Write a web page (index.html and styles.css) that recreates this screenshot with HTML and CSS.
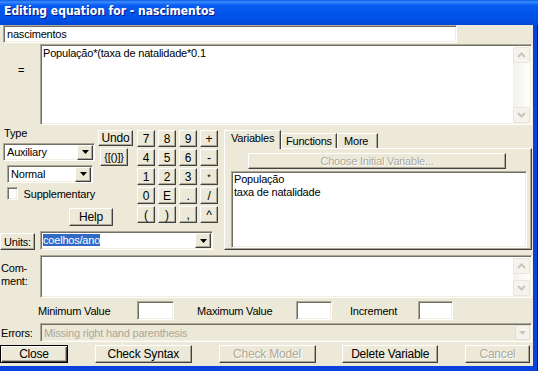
FILE: index.html
```html
<!DOCTYPE html>
<html lang="en">
<head>
  <meta charset="UTF-8" />
  <title>Editing equation</title>
  <link rel="stylesheet" href="styles.css">
</head>
<body>
  <div class="window">
    <div class="titlebar">Editing equation for - nascimentos</div>
    <div class="client">
      <div class="name-row">
        <div class="field name-field">nascimentos</div>
      </div>

      <div class="eq-row">
        <div class="side-label eq-sign">=</div>
        <div class="field textbox eq-box">
          <div class="text">População*(taxa de natalidade*0.1</div>
          <div class="vscroll">
            <div class="sbtn"><svg width="9" height="6" viewBox="0 0 9 6"><polyline points="1,5 4.5,1.5 8,5" fill="none" stroke="#c9c6b6" stroke-width="2"/></svg></div>
            <div class="sbtn"><svg width="9" height="6" viewBox="0 0 9 6"><polyline points="1,1 4.5,4.5 8,1" fill="none" stroke="#c9c6b6" stroke-width="2"/></svg></div>
          </div>
        </div>
      </div>

      <div class="middle">
        <div class="left">
          <div class="tools">
            <div class="type-block">
              <div class="type-top">
                <div class="type-col">
                  <div class="type-label">Type</div>
                  <div class="field combo aux">
                    <span class="combo-text">Auxiliary</span>
                    <span class="drop"><svg width="7" height="4" viewBox="0 0 7 4"><polygon points="0,0 7,0 3.5,4"/></svg></span>
                  </div>
                  <div class="field combo normal">
                    <span class="combo-text">Normal</span>
                    <span class="drop"><svg width="7" height="4" viewBox="0 0 7 4"><polygon points="0,0 7,0 3.5,4"/></svg></span>
                  </div>
                  <div class="check-row">
                    <span class="checkbox"></span>
                    <span>Supplementary</span>
                  </div>
                </div>
                <div class="edit-col">
                  <button class="btn undo">Undo</button>
                  <button class="btn brackets">{[()]}</button>
                </div>
              </div>
              <div class="help-row"><button class="btn help">Help</button></div>
            </div>
            <div class="keypad">
              <button class="btn">7</button><button class="btn">8</button><button class="btn">9</button><button class="btn">+</button>
              <button class="btn">4</button><button class="btn">5</button><button class="btn">6</button><button class="btn">-</button>
              <button class="btn">1</button><button class="btn">2</button><button class="btn">3</button><button class="btn small">*</button>
              <button class="btn">0</button><button class="btn">E</button><button class="btn">.</button><button class="btn">/</button>
              <button class="btn">(</button><button class="btn">)</button><button class="btn">,</button><button class="btn">^</button>
            </div>
          </div>
          <div class="units-row">
            <button class="btn units-btn">Units:</button>
            <div class="field combo units">
              <span class="combo-text"><span class="selected">coelhos/ano</span></span>
              <span class="drop"><svg width="7" height="4" viewBox="0 0 7 4"><polygon points="0,0 7,0 3.5,4"/></svg></span>
            </div>
          </div>
        </div>

        <div class="tabs">
          <div class="tab-heads">
            <div class="tab active">Variables</div>
            <div class="tab">Functions</div>
            <div class="tab">More</div>
          </div>
          <div class="tab-panel">
            <button class="btn disabled choose">Choose Initial Variable...</button>
            <div class="field listbox">
              <div>População</div>
              <div>taxa de natalidade</div>
            </div>
          </div>
        </div>
      </div>

      <div class="comment-row">
        <div class="side-label comment-label">Com-<br>ment:</div>
        <div class="field textbox comment-box">
          <div class="text"></div>
          <div class="vscroll">
            <div class="sbtn"><svg width="9" height="6" viewBox="0 0 9 6"><polyline points="1,5 4.5,1.5 8,5" fill="none" stroke="#c9c6b6" stroke-width="2"/></svg></div>
            <div class="sbtn"><svg width="9" height="6" viewBox="0 0 9 6"><polyline points="1,1 4.5,4.5 8,1" fill="none" stroke="#c9c6b6" stroke-width="2"/></svg></div>
          </div>
        </div>
      </div>

      <div class="range-row">
        <span class="range-label min-label">Minimum Value</span>
        <div class="field range-box"></div>
        <span class="range-label max-label">Maximum Value</span>
        <div class="field range-box max-box"></div>
        <span class="range-label inc-label">Increment</span>
        <div class="field range-box inc-box"></div>
      </div>

      <div class="errors-row">
        <div class="side-label errors-label">Errors:</div>
        <div class="field errors-box">
          <span class="errors-text">Missing right hand parenthesis</span>
          <span class="xp-drop"><svg width="7" height="4" viewBox="0 0 7 4"><polygon points="0,0 7,0 3.5,4" fill="#c9c6b6"/></svg></span>
        </div>
      </div>

      <div class="button-row">
        <button class="btn default close">Close</button>
        <button class="btn wide">Check Syntax</button>
        <button class="btn wide disabled">Check Model</button>
        <button class="btn delete">Delete Variable</button>
        <button class="btn cancel disabled">Cancel</button>
      </div>
    </div>
  </div>
</body>
</html>
```

FILE: styles.css
```css
* {
  margin: 0;
  padding: 0;
  box-sizing: border-box;
}
body {
  font: 11px "Liberation Sans", Arial, sans-serif;
  letter-spacing: -0.2px;
  color: #000;
  background: #ece9d8;
}

.window {
  width: 538px;
  height: 371px;
  display: flex;
  flex-direction: column;
  padding-bottom: 5px;
  background: linear-gradient(to right, #0742dc calc(100% - 1px), #001b8c 0);
}

.titlebar {
  flex: none;
  height: 25px;
  padding: 4px 0 0 4px;
  color: #fff;
  letter-spacing: 0;
  font: bold 12px "DejaVu Sans Condensed", "Liberation Sans", sans-serif;
  text-shadow: 1px 1px #0a1a8a;
  background: linear-gradient(#0a5ae6 0, #3a8cfd 2px, #0b5df3 5px, #0055ea 12px, #0150e4 20px, #0046d6 100%);
}

.client {
  flex: 1;
  width: 533px;
  padding-right: 1px;
  display: flex;
  flex-direction: column;
  background: #ece9d8;
}

/* sunken edit box */
.field {
  background: #fff;
  border: 1px solid;
  border-color: #aca899 #fff #fff #aca899;
  box-shadow: inset 1px 1px #716f64, inset -1px -1px #f1efe2;
}

/* raised button */
.btn {
  font: 11px "Liberation Sans", Arial, sans-serif;
  letter-spacing: -0.2px;
  color: #000;
  background: #ece9d8;
  border: 1px solid;
  border-color: #fff #404040 #404040 #fff;
  box-shadow: inset -1px -1px #aca899;
  display: flex;
  align-items: center;
  justify-content: center;
  padding: 0;
}
.btn.disabled {
  color: #aca899;
  text-shadow: 1px 1px #fff;
}
.btn.default {
  border-color: #000;
  box-shadow: inset 1px 1px #fff, inset -1px -1px #404040, inset -2px -2px #aca899;
}

.side-label {
  width: 40px;
  flex: none;
}

.name-row {
  height: 19px;
  padding-left: 3px;
}
.name-field {
  width: 454px;
  height: 18px;
  padding: 2px 3px;
  line-height: 13px;
}

.eq-row {
  height: 81px;
  display: flex;
}
.eq-sign {
  padding: 20px 0 0 18px;
}

.textbox {
  flex: 1;
  display: flex;
}
.textbox .text {
  flex: 1;
  padding: 2px 2px;
  line-height: 13px;
}
.vscroll {
  width: 17px;
  margin: 2px 1px 1px 0;
  display: flex;
  flex-direction: column;
  justify-content: space-between;
  background: linear-gradient(to right, #f3f1ec, #fefefb);
}
.sbtn {
  height: 16px;
  display: flex;
  align-items: center;
  justify-content: center;
  border: 1px solid #e8e6da;
  border-radius: 2px;
  background: #f4f3ee;
}

.middle {
  height: 125px;
  margin-top: 1px;
  display: flex;
}
.left {
  width: 224px;
  display: flex;
  flex-direction: column;
}
.tools {
  display: flex;
}
.type-block {
  width: 133px;
}
.type-top {
  display: flex;
}
.type-col {
  width: 95px;
}
.type-label {
  height: 13px;
  padding-left: 4px;
  line-height: 13px;
  margin-top: 1px;
}
.combo {
  display: flex;
  align-items: center;
  padding: 1px 1px 1px 3px;
}
.combo-text {
  flex: 1;
  line-height: 13px;
  white-space: nowrap;
  overflow: hidden;
}
.drop {
  width: 16px;
  height: 15px;
  display: flex;
  align-items: center;
  justify-content: center;
  background: #ece9d8;
  border: 1px solid;
  border-color: #fff #404040 #404040 #fff;
  box-shadow: inset -1px -1px #aca899;
}
.aux {
  width: 92px;
  height: 18px;
  margin: 3px 0 0 3px;
}
.normal {
  width: 86px;
  height: 18px;
  margin: 4px 0 0 7px;
}
.check-row {
  display: flex;
  align-items: center;
  gap: 6px;
  margin: 4px 0 0 7px;
  height: 13px;
}
.checkbox {
  width: 13px;
  height: 13px;
  background: #fff;
  border: 1px solid;
  border-color: #aca899 #fff #fff #aca899;
  box-shadow: inset 1px 1px #716f64, inset -1px -1px #f1efe2;
}
.edit-col {
  margin-left: 3px;
  display: flex;
  flex-direction: column;
}
.undo {
  width: 35px;
  height: 16px;
  margin-top: 4px;
  font-size: 12px;
}
.brackets {
  width: 28px;
  height: 18px;
  margin: 2px 0 0 2px;
}
.help-row {
  padding-left: 69px;
  margin-top: 8px;
}
.help {
  width: 44px;
  height: 18px;
  font-size: 12px;
}
.keypad {
  margin: 4px 0 0 4px;
  display: grid;
  grid-template-columns: repeat(4, 18px);
  grid-auto-rows: 17px;
  gap: 2px 3px;
}
.keypad .btn {
  font-size: 12px;
}
.keypad .small {
  font-size: 9px;
}

.units-row {
  margin-top: auto;
  margin-bottom: 1px;
  height: 19px;
  display: flex;
  align-items: flex-end;
}
.units-btn {
  width: 35px;
  height: 17px;
}
.units {
  width: 173px;
  height: 19px;
  margin-left: 5px;
  align-self: flex-start;
  padding-left: 2px;
}
.selected {
  background: #316ac5;
  color: #fff;
}

.tabs {
  width: 308px;
  display: flex;
  flex-direction: column;
}
.tab-heads {
  display: flex;
  align-items: flex-end;
  height: 18px;
  margin-top: 4px;
  position: relative;
  z-index: 1;
}
.tab {
  height: 15px;
  padding: 1px 4px 0;
  border: 1px solid;
  border-bottom: none;
  border-color: #fff #404040 transparent #fff;
  box-shadow: inset -1px 0 #aca899;
  background: #ece9d8;
  line-height: 13px;
  white-space: nowrap;
}
.tab.active {
  height: 19px;
  width: 57px;
  padding: 1px 6px 0;
  margin-bottom: -1px;
}
.tab:nth-child(2) { width: 56px; }
.tab:nth-child(3) { width: 41px; padding-left: 6px; }
.tab-panel {
  flex: 1;
  margin-bottom: 1px;
  border: 1px solid;
  border-color: #fff #404040 #404040 #fff;
  box-shadow: inset -1px -1px #aca899;
  display: flex;
  flex-direction: column;
}
.choose {
  width: 258px;
  height: 16px;
  margin: 4px 0 0 23px;
}
.listbox {
  width: 296px;
  height: 77px;
  margin: 2px 0 0 6px;
  padding: 1px 2px;
  line-height: 13px;
}

.comment-row {
  height: 43px;
  margin-top: 4px;
  display: flex;
}
.comment-label {
  padding: 7px 0 0 1px;
  line-height: 13px;
}

.range-row {
  height: 19px;
  margin-top: 3px;
  display: flex;
  align-items: center;
  padding-left: 38px;
}
.range-label {
  flex: none;
}
.min-label { width: 99px; }
.max-label { width: 99px; margin-left: 23px; }
.inc-label { width: 68px; margin-left: 18px; }
.range-box {
  width: 37px;
  height: 19px;
}
.max-box { width: 36px; }
.inc-box { width: 35px; }

.errors-row {
  height: 19px;
  margin-top: 3px;
  display: flex;
  align-items: center;
}
.errors-label {
  padding-left: 1px;
}
.errors-box {
  flex: 1;
  height: 19px;
  display: flex;
  align-items: center;
  background: #ece9d8;
  padding: 1px 1px 1px 3px;
}
.errors-text {
  flex: 1;
  color: #aca899;
}
.xp-drop {
  width: 15px;
  height: 15px;
  display: flex;
  align-items: center;
  justify-content: center;
  border: 1px solid #e2e0d4;
  border-radius: 2px;
  background: #f4f3ee;
}

.button-row {
  height: 18px;
  margin-top: 3px;
  display: flex;
  justify-content: space-between;
  padding-right: 2px;
}
.button-row .btn {
  height: 18px;
  font-size: 12px;
}
.close { width: 68px; }
.wide { width: 97px; }
.delete { width: 96px; }
.cancel { width: 65px; }
```
